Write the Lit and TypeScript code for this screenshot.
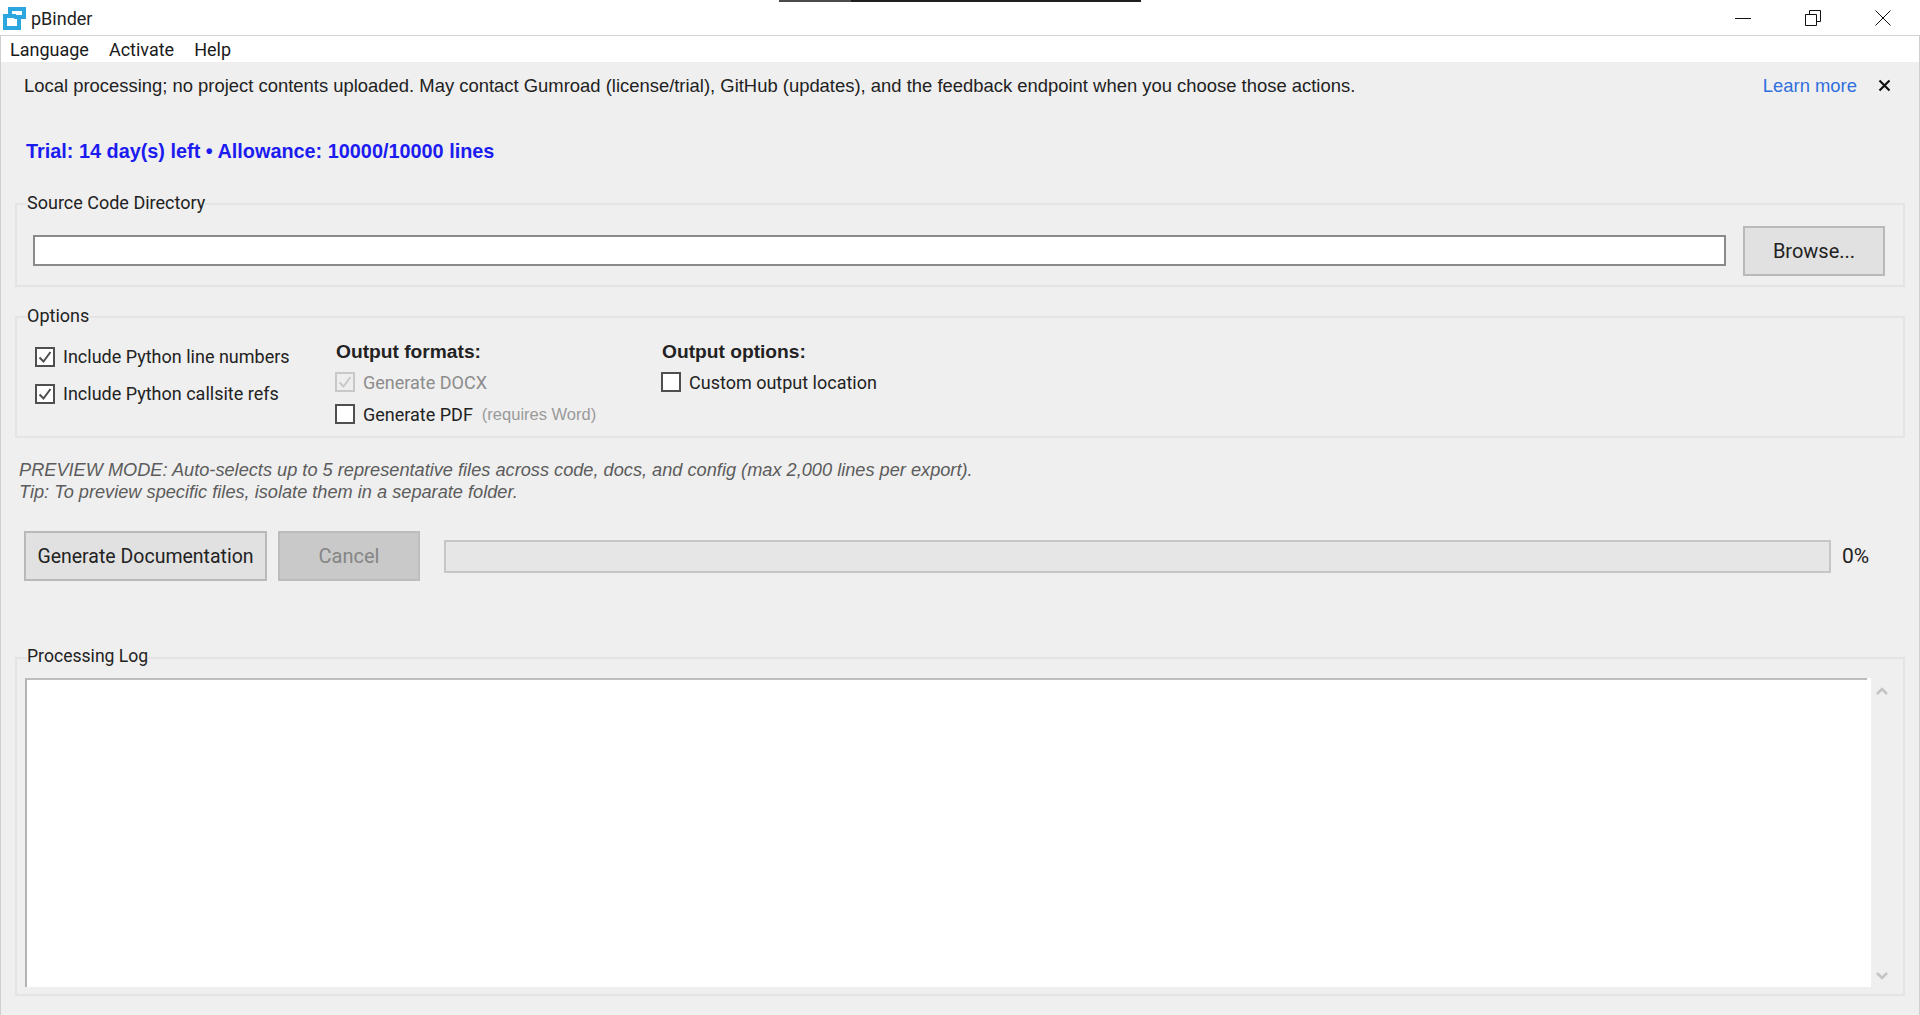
import { LitElement, html, css } from "lit";
import { customElement } from "lit/decorators.js";

@customElement("app-root")
export class AppRoot extends LitElement {
  static styles = css`
    :host { display: block; width: 1920px; height: 1015px; overflow: hidden; background: #efefef; font-family: "Roboto", "Liberation Sans", sans-serif; color: #1a1a1a; position: relative; }
    * { box-sizing: border-box; }
    .notch { position: absolute; left: 779px; top: 0; width: 362px; height: 2px; background: linear-gradient(90deg, #4a4a4a 0 72px, #1e1e1e 72px); }
    .title { height: 36px; background: #fff; border-bottom: 1px solid #d2d2d2; display: flex; align-items: center; padding-left: 3px; }
    .title svg.logo { width: 23px; height: 23px; display: block; margin: 1px 5px 0 0; }
    .title .name { font-size: 18px; color: #222; padding-top: 2px; }
    .controls { margin-left: auto; margin-right: 2px; display: flex; }
    .controls button { width: 70px; height: 35px; border: 0; background: none; padding: 0; display: flex; align-items: center; justify-content: center; }
    .controls svg { width: 16px; height: 16px; display: block; }
    .frame { height: 979px; border-left: 1px solid #cfcfcf; border-right: 1px solid #cfcfcf; }
    .menu { height: 26px; background: #fff; display: flex; align-items: center; padding-left: 9px; gap: 20px; font-size: 18px; }
    .banner { height: 47px; display: flex; align-items: center; padding: 0 28px 0 23px; font-family: "Liberation Sans", Arial, sans-serif; font-size: 18.43px; color: #222; }
    .banner a { margin-left: auto; color: #2f6fde; text-decoration: none; }
    .banner svg { width: 13px; height: 13px; margin-left: 21px; display: block; }
    .trial { margin: 30px 0 0 25px; height: 24px; line-height: 24px; font-family: "Liberation Sans", Arial, sans-serif; font-weight: 700; font-size: 19.85px; color: #1c1cf0; }
    fieldset { margin: 0 14px 0 14px; padding: 0; border: 2px solid #e4e4e4; min-width: 0; }
    legend { margin-left: 10px; padding: 0; font-size: 18px; line-height: 20px; color: #222; position: relative; top: -1px; }
    .source { margin-top: 31px; height: 93px; }
    .source-row { display: flex; align-items: flex-start; padding: 0 18px 0 16px; gap: 17px; margin-top: 12px; }
    .field { flex: 1; margin-top: 9px; height: 31px; background: #fff; border: 2px solid #8a8a8a; }
    button.btn { font-family: inherit; border: 2px solid #b9b9b9; background: #e1e1e1; color: #222; padding: 0; font-size: 20px; height: 50px; }
    .browse { width: 142px; }
    .options { margin-top: 20px; height: 131px; }
    .opt-row { display: flex; padding: 0 0 0 19px; margin-top: 14px; }
    .col1 { width: 300px; padding-top: 6px; display: flex; flex-direction: column; gap: 18px; }
    .col2 { width: 326px; }
    .head { font-family: "Liberation Sans", Arial, sans-serif; font-weight: 700; font-size: 19.2px; line-height: 22px; color: #222; margin-bottom: 9px; }
    .check { display: flex; align-items: center; gap: 8px; font-size: 18px; height: 19px; color: #222; white-space: nowrap; }
    .col2 .check, .col3 .check { height: 20px; gap: 8px; }
    .col2 .check + .check { margin-top: 12px; }
    .box { width: 20px; height: 20px; flex: none; background: #fff; border: 2px solid #4f4f4f; display: flex; align-items: center; justify-content: center; margin-left: -1px; margin-right: 0; }
    .box svg { width: 16px; height: 16px; display: block; }
    .check.off { color: #8c8c8c; }
    .check.off .box { border-color: #c8c8c8; background: #eee; }
    .req { font-family: "Liberation Sans", Arial, sans-serif; font-size: 16.5px; color: #9a9a9a; margin-left: 1px; }
    .note { margin: 21px 0 0 18px; font-family: "Liberation Sans", Arial, sans-serif; font-style: italic; font-size: 18.2px; line-height: 22px; color: #5c5c5c; }
    .actions { display: flex; align-items: center; margin: 28px 0 0 23px; }
    .gen { width: 243px; font-size: 19.5px !important; }
    .cancel { width: 142px; margin-left: 11px; background: #c9c9c9 !important; border-color: #bdbdbd !important; color: #858585 !important; }
    .progress { width: 1387px; height: 33px; margin-left: 24px; background: #e6e6e6; border: 2px solid #c6c6c6; }
    .pct { margin-left: 11px; font-size: 21px; color: #222; }
    .log { margin-top: 67px; height: 348px; }
    .log legend { top: -2px; font-size: 17.6px; }
    .log-inner { display: flex; margin: 10px 0 0 8px; height: 309px; }
    .text { flex: none; width: 1846px; background: #fff; border-top: 2px solid #bdbdbd; border-left: 2px solid #b4b4b4; position: relative; }
    .text::after { content: ""; position: absolute; right: 0; top: -2px; width: 4px; height: 2px; background: #fff; }
    .scroll { flex: 1; display: flex; flex-direction: column; align-items: center; justify-content: space-between; padding: 9px 10px 7px 0; }
    .scroll svg { width: 12px; height: 8px; display: block; }
  `;

  private check(label: string, on: boolean, off = false, extra?: unknown) {
    return html`<div class="check ${off ? "off" : ""}">
      <span class="box">${on ? html`<svg viewBox="0 0 16 16"><path d="M2.5 8.5l4 4 7-9.5" fill="none" stroke="${off ? "#c8c8c8" : "#4f4f4f"}" stroke-width="2"/></svg>` : ""}</span>
      <span>${label}</span>${extra ?? ""}
    </div>`;
  }

  render() {
    return html`
      <div class="notch"></div>
      <div class="title">
        <svg class="logo" viewBox="0 0 23 23" fill="none" stroke="#2ba6de" stroke-width="4">
          <path d="M7 8V2H21V10H11"/>
          <path d="M13 9H2V21H16V11"/>
        </svg>
        <span class="name">pBinder</span>
        <div class="controls">
          <button aria-label="Minimize"><svg viewBox="0 0 16 16"><path d="M0 8.5h16" stroke="#111" fill="none"/></svg></button>
          <button aria-label="Restore"><svg viewBox="0 0 16 16"><path d="M.5 4.5h11v11H.5zM4.5 4.5V.5h11v11h-4" stroke="#111" fill="none"/></svg></button>
          <button aria-label="Close"><svg viewBox="0 0 16 16"><path d="M.5.5l15 15M15.5.5l-15 15" stroke="#111" fill="none"/></svg></button>
        </div>
      </div>
      <div class="frame">
        <div class="menu"><span>Language</span><span>Activate</span><span>Help</span></div>
        <div class="banner">
          <span>Local processing; no project contents uploaded. May contact Gumroad (license/trial), GitHub (updates), and the feedback endpoint when you choose those actions.</span>
          <a href="#">Learn more</a>
          <svg viewBox="0 0 13 13"><path d="M1.5 1.5l10 10M11.5 1.5l-10 10" stroke="#111" stroke-width="2.2" fill="none"/></svg>
        </div>
        <div class="trial">Trial: 14 day(s) left • Allowance: 10000/10000 lines</div>
        <fieldset class="source">
          <legend>Source Code Directory</legend>
          <div class="source-row"><div class="field"></div><button class="btn browse">Browse...</button></div>
        </fieldset>
        <fieldset class="options">
          <legend>Options</legend>
          <div class="opt-row">
            <div class="col1">
              ${this.check("Include Python line numbers", true)}
              ${this.check("Include Python callsite refs", true)}
            </div>
            <div class="col2">
              <div class="head">Output formats:</div>
              ${this.check("Generate DOCX", true, true)}
              ${this.check("Generate PDF", false, false, html`<span class="req">(requires Word)</span>`)}
            </div>
            <div class="col3">
              <div class="head">Output options:</div>
              ${this.check("Custom output location", false)}
            </div>
          </div>
        </fieldset>
        <div class="note">PREVIEW MODE: Auto-selects up to 5 representative files across code, docs, and config (max 2,000 lines per export).<br>Tip: To preview specific files, isolate them in a separate folder.</div>
        <div class="actions">
          <button class="btn gen">Generate Documentation</button>
          <button class="btn cancel">Cancel</button>
          <div class="progress"></div>
          <span class="pct">0%</span>
        </div>
        <fieldset class="log">
          <legend>Processing Log</legend>
          <div class="log-inner">
            <div class="text"></div>
            <div class="scroll">
              <svg viewBox="0 0 12 8"><path d="M1 7l5-5 5 5" stroke="#c4c4c4" stroke-width="2.6" fill="none"/></svg>
              <svg viewBox="0 0 12 8"><path d="M1 1l5 5 5-5" stroke="#c4c4c4" stroke-width="2.6" fill="none"/></svg>
            </div>
          </div>
        </fieldset>
      </div>
    `;
  }
}
